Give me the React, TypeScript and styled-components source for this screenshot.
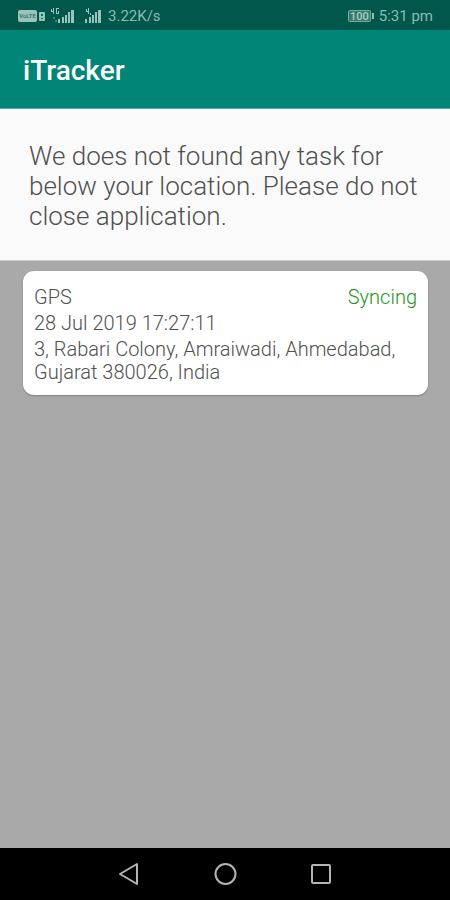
import React from 'react';
import styled, { createGlobalStyle } from 'styled-components';

const GlobalStyle = createGlobalStyle`
  *, *::before, *::after { box-sizing: border-box; }
  body {
    margin: 0;
    font-family: Roboto, "Liberation Sans", sans-serif;
  }
`;

const Screen = styled.div`
  display: flex;
  flex-direction: column;
  min-height: 100vh;
  background: #a9a9a9;
`;

const StatusBar = styled.div`
  display: flex;
  align-items: center;
  justify-content: space-between;
  height: 30px;
  padding: 2px 17px 0 18px;
  background: #00574b;
  color: #8ebbb2;
  font-size: 15px;
  line-height: 20px;
`;

const StatusGroup = styled.div<{ $gap: number }>`
  display: flex;
  align-items: center;
  gap: ${({ $gap }) => $gap}px;

  svg { display: block; }
`;

const AppBar = styled.header`
  display: flex;
  align-items: center;
  padding: 22px 23px 18px;
  background: #008577;
  border-bottom: 1px solid #5aa79e;
`;

const AppTitle = styled.h1`
  margin: 0;
  color: #ffffff;
  font-size: 28px;
  font-weight: 500;
  line-height: 38px;
`;

const Notice = styled.p`
  margin: 0;
  padding: 32px 29px 29px;
  background: #fafafa;
  border-bottom: 1px solid #cccccc;
  color: #505050;
  font-size: 26px;
  font-weight: 300;
  line-height: 30px;
`;

const TaskList = styled.main`
  flex: 1;
  padding: 10px 22px 10px 23px;
`;

const TaskCard = styled.article`
  display: flex;
  flex-direction: column;
  gap: 3px;
  padding: 15px 11px 11px;
  border-radius: 11px;
  background: #ffffff;
  box-shadow: 0 1px 2px rgba(0, 0, 0, 0.25);
  color: #505050;
  font-size: 20px;
  font-weight: 300;
  line-height: 23px;
`;

const TaskHeader = styled.div`
  display: flex;
  justify-content: space-between;
`;

const TaskStatus = styled.span`
  color: #1f9424;
`;

const NavBar = styled.nav`
  display: flex;
  align-items: center;
  justify-content: center;
  gap: 64px;
  height: 52px;
  background: #000000;
`;

const NavButton = styled.button`
  display: flex;
  padding: 4px;
  border: 0;
  background: transparent;
  color: #b4b4b4;
`;

const VolteIcon = () => (
  <svg width="28" height="14" viewBox="0 0 28 14" aria-hidden="true">
    <rect x="0" y="1" width="19" height="12" rx="2" fill="#9cc3bb" />
    <text x="9.5" y="9" fontSize="6" fontWeight="500" textAnchor="middle" fill="#26695e">VoLTE</text>
    <rect x="21" y="3" width="6" height="9" rx="1" fill="#9cc3bb" />
    <path d="M23 5h2v2h-2zM23 9h2v1h-2z" fill="#26695e" />
  </svg>
);

const SignalBars = () => (
  <path d="M0 12h2v4H0zM4 10h2v6H4zM7 8h2v8H7zM10 5h2v11h-2zM13 3h3v13h-3z" />
);

const SignalIcon = ({ fast }: { fast?: boolean }) => (
  <svg width={fast ? 24 : 18} height="18" viewBox={fast ? '0 0 24 18' : '0 0 18 18'} fill="#9cc3bb" aria-hidden="true">
    {fast ? (
      <>
        <path d="M0 2h1v2h1V1h1v6H2V5H0zM5 1h3v1H6v4h1V4h1v3H5z" />
        <path d="M2 10h2v2H2zM4 13h2v2H4z" opacity="0.4" />
        <g transform="translate(7)"><SignalBars /></g>
      </>
    ) : (
      <>
        <path d="M1 2h1v2h1V1h1v6H3V5H1zM5 6h1v2H5z" />
        <SignalBars />
      </>
    )}
  </svg>
);

const BatteryIcon = () => (
  <svg width="27" height="14" viewBox="0 0 27 14" aria-hidden="true">
    <rect x="0.5" y="1.5" width="22" height="11" rx="1" fill="#37786c" stroke="#75aaa0" />
    <text x="11.5" y="11" fontSize="11" fontWeight="500" textAnchor="middle" fill="#acd0c8">100</text>
    <path d="M24 4h2v6h-2z" fill="#8ebbb2" />
  </svg>
);

const navItems = [
  { label: 'Back', shape: <path d="M20 3v20L3 13z" /> },
  { label: 'Home', shape: <circle cx="12.5" cy="13" r="10" /> },
  { label: 'Recent apps', shape: <rect x="3" y="4" width="18" height="18" rx="1" /> },
];

export default function App() {
  return (
    <>
      <GlobalStyle />
      <Screen>
        <StatusBar>
          <StatusGroup $gap={5}>
            <VolteIcon />
            <StatusGroup $gap={10}>
              <SignalIcon fast />
              <SignalIcon />
            </StatusGroup>
            <span>3.22K/s</span>
          </StatusGroup>
          <StatusGroup $gap={4}>
            <BatteryIcon />
            <span>5:31 pm</span>
          </StatusGroup>
        </StatusBar>
        <AppBar>
          <AppTitle>iTracker</AppTitle>
        </AppBar>
        <Notice>
          We does not found any task for below your location. Please do not close application.
        </Notice>
        <TaskList>
          <TaskCard>
            <TaskHeader>
              <span>GPS</span>
              <TaskStatus>Syncing</TaskStatus>
            </TaskHeader>
            <time dateTime="2019-07-28T17:27:11">28 Jul 2019 17:27:11</time>
            <span>3, Rabari Colony, Amraiwadi, Ahmedabad, Gujarat 380026, India</span>
          </TaskCard>
        </TaskList>
        <NavBar>
          {navItems.map(({ label, shape }) => (
            <NavButton key={label} type="button" aria-label={label}>
              <svg width="24" height="26" viewBox="0 0 24 26" fill="none" stroke="currentColor" strokeWidth="2" strokeLinejoin="round" aria-hidden="true">
                {shape}
              </svg>
            </NavButton>
          ))}
        </NavBar>
      </Screen>
    </>
  );
}
